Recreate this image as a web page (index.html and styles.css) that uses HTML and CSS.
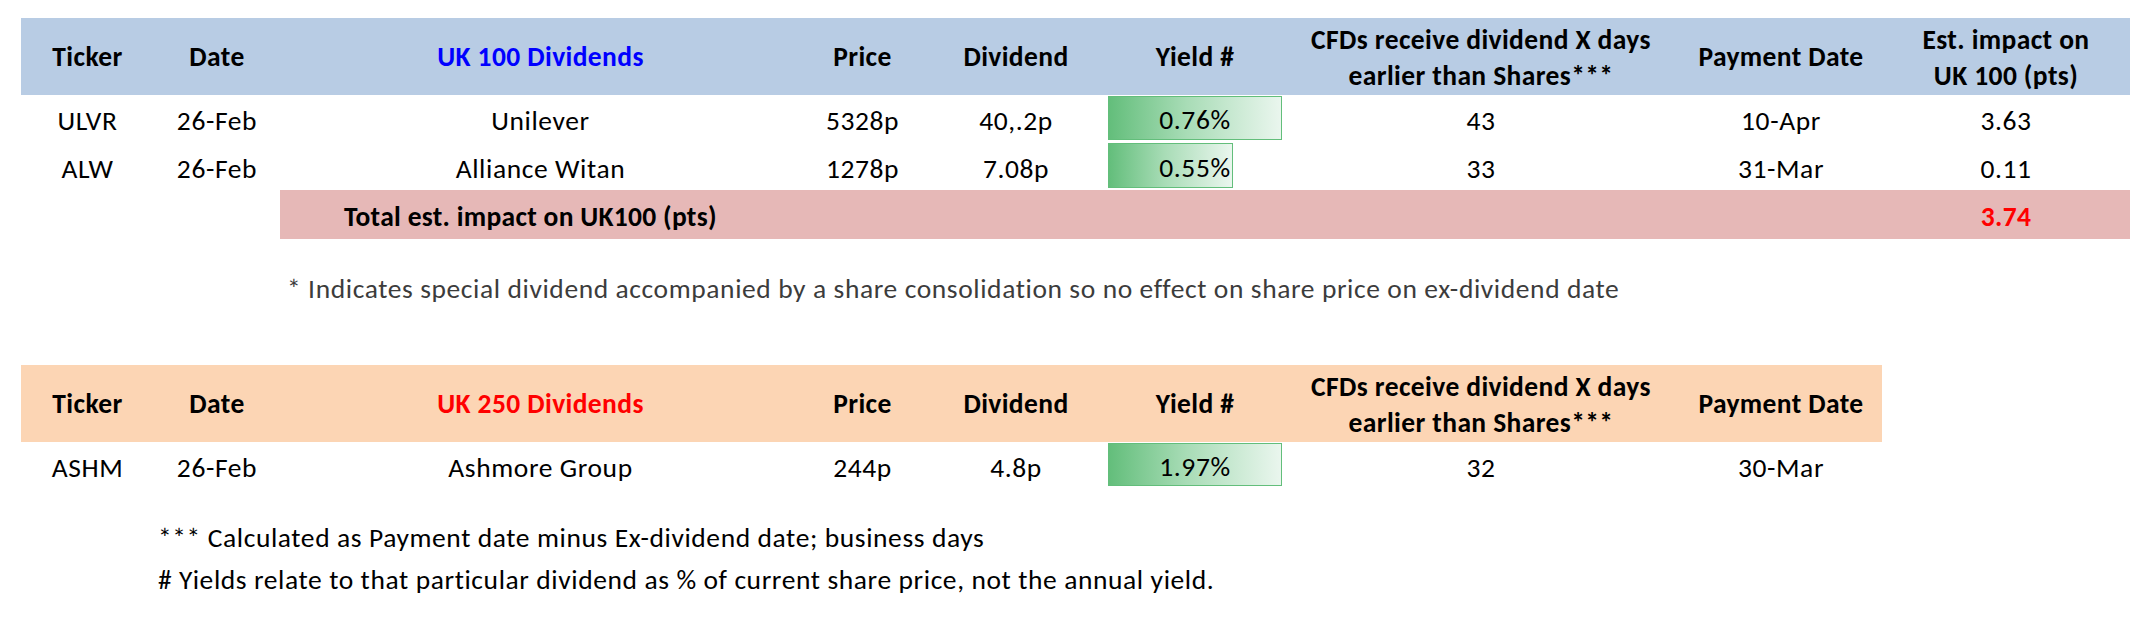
FILE: index.html
```html
<!DOCTYPE html>
<html lang="en">
<head>
<meta charset="utf-8">
<title>UK Dividends</title>
<link rel="stylesheet" href="styles.css">
</head>
<body>
<div class="page">
  <div class="table t100">
    <div class="row head blue">
      <div class="cell">Ticker</div>
      <div class="cell">Date</div>
      <div class="cell title-blue">UK 100 Dividends</div>
      <div class="cell">Price</div>
      <div class="cell">Dividend</div>
      <div class="cell">Yield #</div>
      <div class="cell two">CFDs receive dividend X days<br>earlier than Shares***</div>
      <div class="cell">Payment Date</div>
      <div class="cell two">Est. impact on<br>UK 100 (pts)</div>
    </div>
    <div class="row data r1">
      <div class="cell">ULVR</div>
      <div class="cell">26-Feb</div>
      <div class="cell">Unilever</div>
      <div class="cell">5328p</div>
      <div class="cell">40,.2p</div>
      <div class="cell yield"><span class="bar" style="width:100%"></span><span class="ytext">0.76%</span></div>
      <div class="cell">43</div>
      <div class="cell">10-Apr</div>
      <div class="cell">3.63</div>
    </div>
    <div class="row data r2">
      <div class="cell">ALW</div>
      <div class="cell">26-Feb</div>
      <div class="cell">Alliance Witan</div>
      <div class="cell">1278p</div>
      <div class="cell">7.08p</div>
      <div class="cell yield"><span class="bar" style="width:72%"></span><span class="ytext">0.55%</span></div>
      <div class="cell">33</div>
      <div class="cell">31-Mar</div>
      <div class="cell">0.11</div>
    </div>
    <div class="row total">
      <div class="total-label">Total est. impact on UK100 (pts)</div>
      <div class="cell total-value">3.74</div>
    </div>
  </div>

  <p class="note note-grey">* Indicates special dividend accompanied by a share consolidation so no effect on share price on ex-dividend date</p>

  <div class="table t250">
    <div class="row head orange">
      <div class="cell">Ticker</div>
      <div class="cell">Date</div>
      <div class="cell title-red">UK 250 Dividends</div>
      <div class="cell">Price</div>
      <div class="cell">Dividend</div>
      <div class="cell">Yield #</div>
      <div class="cell two">CFDs receive dividend X days<br>earlier than Shares***</div>
      <div class="cell">Payment Date</div>
    </div>
    <div class="row data r3">
      <div class="cell">ASHM</div>
      <div class="cell">26-Feb</div>
      <div class="cell">Ashmore Group</div>
      <div class="cell">244p</div>
      <div class="cell">4.8p</div>
      <div class="cell yield"><span class="bar" style="width:100%"></span><span class="ytext">1.97%</span></div>
      <div class="cell">32</div>
      <div class="cell">30-Mar</div>
    </div>
  </div>

  <div class="notes">
    <p class="note note-black">*** Calculated as Payment date minus Ex-dividend date; business days</p>
    <p class="note note-black"># Yields relate to that particular dividend as % of current share price, not the annual yield.</p>
  </div>
</div>
</body>
</html>
```

FILE: styles.css
```css
html, body {
  margin: 0;
  padding: 0;
  background: #ffffff;
}

body {
  font-family: Carlito, Lato, "Open Sans", sans-serif;
  font-size: 27.5px;
  letter-spacing: 0.6px;
  color: #000000;
}

.page {
  padding: 18px 0 0 21px;
  width: 2109px;
}

.row {
  display: grid;
  grid-template-columns: 133px 126px 521px 123px 184px 174px 398px 202px 248px;
}

.t250 .row {
  grid-template-columns: 133px 126px 521px 123px 184px 174px 398px 202px;
  width: 1861px;
}

.cell {
  display: flex;
  align-items: center;
  justify-content: center;
  text-align: center;
  white-space: nowrap;
}

.head {
  height: 77px;
  font-weight: bold;
  letter-spacing: 0.4px;
}

.head .cell.two {
  line-height: 36px;
  padding-top: 2px;
}

.blue { background: #b8cce4; }
.orange { background: #fcd5b4; }

.title-blue { color: #0000ff; }
.title-red { color: #ff0000; }

.data .cell {
  padding-top: 4px;
  box-sizing: border-box;
}

.r1 { height: 47px; }
.r2 { height: 48px; }
.r3 { height: 46px; }

.data .cell.yield {
  display: grid;
  grid-template-columns: 100%;
  grid-template-rows: 100%;
  align-items: stretch;
  justify-items: start;
  padding: 1px 0 2px 0;
}

.bar {
  grid-area: 1 / 1;
  height: 100%;
  box-sizing: border-box;
  border: 1px solid #63be7b;
  background: linear-gradient(to right, #63be7b 0%, #a8dcb6 45%, #eaf6ee 100%);
}

.ytext {
  grid-area: 1 / 1;
  justify-self: center;
  align-self: center;
  padding-top: 3px;
}

.total {
  height: 49px;
  background: #e6b8b7;
  margin-left: 259px;
  grid-template-columns: 1602px 248px;
  font-weight: bold;
  letter-spacing: 0.3px;
}

.total-label {
  display: flex;
  align-items: center;
  padding-left: 64px;
  padding-top: 3px;
}

.total-value {
  color: #ff0000;
  padding-top: 3px;
}

.note {
  margin: 0;
  height: 42px;
  line-height: 42px;
  white-space: nowrap;
}

.note-grey {
  color: #3c3c3c;
  margin: 29px 0 0 266px;
  height: 42px;
}

.t250 {
  margin-top: 55px;
}

.notes {
  margin: 29px 0 0 137px;
}

.note-black {
  color: #000000;
}
```
